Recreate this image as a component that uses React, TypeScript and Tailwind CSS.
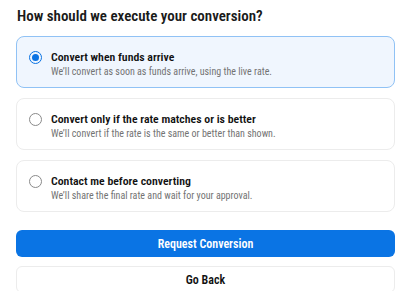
import { useState } from "react";

const OPTIONS = [
  {
    id: "arrive",
    title: "Convert when funds arrive",
    desc: "We\u2019ll convert as soon as funds arrive, using the live rate.",
  },
  {
    id: "rate",
    title: "Convert only if the rate matches or is better",
    desc: "We\u2019ll convert if the rate is the same or better than shown.",
  },
  {
    id: "contact",
    title: "Contact me before converting",
    desc: "We\u2019ll share the final rate and wait for your approval.",
  },
];

export default function App() {
  const [picked, setPicked] = useState("arrive");

  return (
    <div
      className="min-h-[291px] w-[406px] bg-white pl-4 pr-[11px] pt-[5px] text-[#1a1a1a]"
      style={{ fontFamily: '"Roboto Condensed", Roboto, sans-serif' }}
    >
      <h2 className="pl-px text-[15px] font-semibold leading-[22px]">
        How should we execute your conversion?
      </h2>

      <div className="mt-[9px] flex flex-col gap-2.5">
        {OPTIONS.map((o) => {
          const on = picked === o.id;
          return (
            <button
              key={o.id}
              onClick={() => setPicked(o.id)}
              className={`flex h-[52px] items-start gap-[9px] rounded-lg border px-[12px] pt-3 text-left ${
                on ? "border-[#90c2f5] bg-[#f0f6fe]" : "border-[#ececec] bg-white"
              }`}
            >
              <span
                className={`mt-[1.5px] flex h-[13px] w-[13px] shrink-0 items-center justify-center rounded-full border ${
                  on ? "border-[#0a73e3]" : "border-[#8a8a8a]"
                }`}
              >
                {on && <span className="h-[7px] w-[7px] rounded-full bg-[#0a73e3]" />}
              </span>
              <span className="flex flex-col">
                <span className="text-[11.8px] font-semibold leading-[16px] text-[#111]">
                  {o.title}
                </span>
                <span className="text-[10px] leading-[14px] text-[#737373]">{o.desc}</span>
              </span>
            </button>
          );
        })}
      </div>

      <button className="mt-[18px] flex h-[27px] w-full items-center justify-center rounded-md bg-[#0a74e4] text-[12px] font-semibold text-white">
        Request Conversion
      </button>
      <button className="mt-[9px] flex h-[27px] w-full items-center justify-center rounded-md border border-[#ececec] bg-white text-[12px] font-semibold text-[#111]">
        Go Back
      </button>
    </div>
  );
}
